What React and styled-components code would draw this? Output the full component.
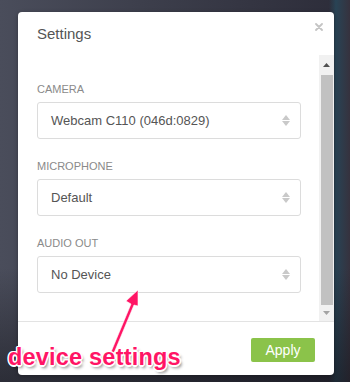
import React from 'react';
import styled, { createGlobalStyle } from 'styled-components';

const PINK = '#ff1565';
const GREEN = '#8bc34a';

const GlobalStyle = createGlobalStyle`
	html, body {
		margin: 0;
		padding: 0;
		width: 350px;
		height: 382px;
		overflow: hidden;
	}
	body {
		font-family: "Liberation Sans", Arial, sans-serif;
	}
`;

const Backdrop = styled.div`
	position: relative;
	width: 350px;
	height: 382px;
	padding: 12px 16px 7px 18px;
	box-sizing: border-box;
	background:
		linear-gradient(180deg, rgba(0,0,0,0) 0%, rgba(0,0,0,0) 70%, rgba(20,20,26,0.55) 100%),
		linear-gradient(90deg, transparent 0%, transparent 94%, rgba(40,70,88,0.9) 96%, rgba(55,50,62,0.9) 100%),
		linear-gradient(90deg, #4a4d5b 0%, #3d3f4c 40%, #2c2c39 100%);
`;

const Modal = styled.div`
	width: 316px;
	height: 363px;
	background: #fff;
	border-radius: 4px;
	display: flex;
	flex-direction: column;
	box-shadow: 0 1px 4px rgba(0,0,0,0.3);
	overflow: hidden;
`;

const Header = styled.div`
	height: 43px;
	display: flex;
	justify-content: space-between;
	align-items: flex-start;
	padding: 13px 11px 0 19px;
	box-sizing: border-box;
`;

const Title = styled.div`
	font-size: 15px;
	color: #555;
`;

const Close = styled.div`
	margin-top: -2px;
	display: flex;
`;

const ScrollArea = styled.div`
	height: 267px;
	display: flex;
	border-bottom: 1px solid #e3e3e3;
	box-sizing: border-box;
`;

const Body = styled.div`
	flex: 1;
	padding: 27px 18px 0 19px;
	display: flex;
	flex-direction: column;
	gap: 20px;
`;

const Field = styled.div`
	display: flex;
	flex-direction: column;
	gap: 6px;
`;

const Label = styled.div`
	font-size: 11px;
	line-height: 14px;
	color: #8a8a8a;
	text-transform: uppercase;
`;

const Select = styled.div`
	height: 37px;
	border: 1px solid #dcdcdc;
	border-radius: 3px;
	box-sizing: border-box;
	display: flex;
	align-items: center;
	justify-content: space-between;
	padding: 0 10px 0 13px;
	font-size: 13px;
	color: #555;
`;

const Carets = styled.div`
	display: flex;
	flex-direction: column;
	gap: 1px;
	color: #c9c9c9;
`;

const Scrollbar = styled.div`
	width: 15px;
	background: #f1f1f1;
	display: flex;
	flex-direction: column;
	align-items: center;
`;

const ScrollArrow = styled.div`
	height: ${p => p.h}px;
	display: flex;
	align-items: center;
	justify-content: center;
`;

const Thumb = styled.div`
	width: 12px;
	flex: 1;
	background: #c1c1c1;
`;

const Footer = styled.div`
	flex: 1;
	display: flex;
	justify-content: flex-end;
	padding: 16px 19px 0 0;
`;

const ApplyButton = styled.button`
	width: 64px;
	height: 24px;
	border: none;
	border-radius: 2px;
	background: ${GREEN};
	color: #fff;
	font-family: "Liberation Sans", Arial, sans-serif;
	font-size: 14px;
	padding: 0;
`;

const Annotation = styled.div`
	position: absolute;
	left: 0;
	top: 0;
	width: 350px;
	height: 382px;
	pointer-events: none;
`;

const AnnotationText = styled.div`
	position: absolute;
	left: 8px;
	top: 344px;
	font-size: 23.5px;
	font-weight: bold;
	color: ${PINK};
	letter-spacing: 0.2px;
	text-shadow:
		-1.5px 0 #fff, 1.5px 0 #fff, 0 -1.5px #fff, 0 1.5px #fff,
		-1px -1px #fff, 1px 1px #fff, -1px 1px #fff, 1px -1px #fff,
		2px 3px 3px rgba(0,0,0,0.45);
`;

function SelectBox({ value }) {
	return (
		<Select>
			<span>{value}</span>
			<Carets>
				<svg width="8" height="5" viewBox="0 0 8 5"><path d="M0 5 L4 0 L8 5 Z" fill="currentColor" /></svg>
				<svg width="8" height="5" viewBox="0 0 8 5"><path d="M0 0 L4 5 L8 0 Z" fill="currentColor" /></svg>
			</Carets>
		</Select>
	);
}

export default function App() {
	return (
		<Backdrop>
			<GlobalStyle />
			<Modal>
				<Header>
					<Title>Settings</Title>
					<Close>
						<svg width="8" height="8" viewBox="0 0 8 8">
							<path d="M1 1 L7 7 M7 1 L1 7" stroke="#c4c4c4" strokeWidth="1.8" strokeLinecap="round" />
						</svg>
					</Close>
				</Header>
				<ScrollArea>
					<Body>
						<Field>
							<Label>Camera</Label>
							<SelectBox value="Webcam C110 (046d:0829)" />
						</Field>
						<Field>
							<Label>Microphone</Label>
							<SelectBox value="Default" />
						</Field>
						<Field>
							<Label>Audio Out</Label>
							<SelectBox value="No Device" />
						</Field>
					</Body>
					<Scrollbar>
						<ScrollArrow h={20}>
							<svg width="7" height="4" viewBox="0 0 7 4"><path d="M0 4 L3.5 0 L7 4 Z" fill="#505050" /></svg>
						</ScrollArrow>
						<Thumb />
						<ScrollArrow h={16}>
							<svg width="7" height="4" viewBox="0 0 7 4"><path d="M0 0 L3.5 4 L7 0 Z" fill="#a3a3a3" /></svg>
						</ScrollArrow>
					</Scrollbar>
				</ScrollArea>
				<Footer>
					<ApplyButton>Apply</ApplyButton>
				</Footer>
			</Modal>
			<Annotation>
				<svg width="350" height="382" viewBox="0 0 350 382">
					<path d="M111 352 L131 304 L126 301 L138 290 L138 306 L134 305 L114 353 Z" fill={PINK} stroke="#fff" strokeWidth="0.6" />
				</svg>
				<AnnotationText>device settings</AnnotationText>
			</Annotation>
		</Backdrop>
	);
}
